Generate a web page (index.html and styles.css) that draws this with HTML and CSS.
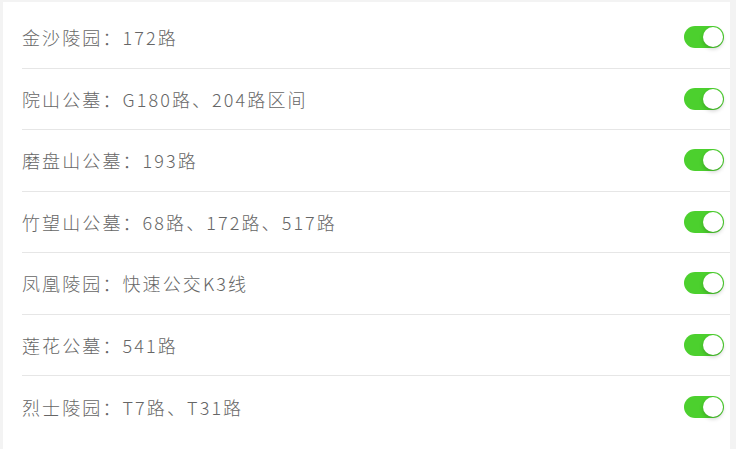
FILE: index.html
```html
<!DOCTYPE html>
<html lang="zh">
<head>
<meta charset="utf-8">
<link rel="stylesheet" href="styles.css">
</head>
<body>
<div class="card">
  <div class="row"><span class="label">金沙陵园：172路</span><span class="switch"><span class="knob"></span></span></div>
  <div class="row"><span class="label">院山公墓：G180路、204路区间</span><span class="switch"><span class="knob"></span></span></div>
  <div class="row"><span class="label">磨盘山公墓：193路</span><span class="switch"><span class="knob"></span></span></div>
  <div class="row"><span class="label">竹望山公墓：68路、172路、517路</span><span class="switch"><span class="knob"></span></span></div>
  <div class="row"><span class="label">凤凰陵园：快速公交K3线</span><span class="switch"><span class="knob"></span></span></div>
  <div class="row"><span class="label">莲花公墓：541路</span><span class="switch"><span class="knob"></span></span></div>
  <div class="row"><span class="label">烈士陵园：T7路、T31路</span><span class="switch"><span class="knob"></span></span></div>
</div>
</body>
</html>
```
FILE: styles.css
```css
html, body {
  margin: 0;
  padding: 0;
  background: #f3f3f3;
  height: 100%;
  overflow: hidden;
}
body {
  padding-top: 2px;
  box-sizing: border-box;
}
.card {
  margin: 0 6px 0 3px;
  background: #ffffff;
  padding-top: 5px;
  height: 100%;
  box-sizing: border-box;
}
.row {
  margin-left: 19px;
  height: 61.5px;
  box-sizing: border-box;
  border-bottom: 1px solid #e6e6e6;
  display: flex;
  align-items: center;
  justify-content: space-between;
  padding-right: 6px;
}
.row:last-child {
  border-bottom: none;
}
.label {
  font-family: "Noto Sans CJK SC", "Noto Sans", sans-serif;
  font-size: 18px;
  font-weight: 300;
  color: #666666;
  letter-spacing: 2.1px;
}
.switch {
  width: 40px;
  height: 22px;
  border-radius: 11px;
  background: #4cd02e;
  display: flex;
  align-items: center;
  justify-content: flex-end;
  padding: 0 1px;
  box-sizing: border-box;
}
.knob {
  width: 20px;
  height: 20px;
  border-radius: 50%;
  background: #ffffff;
  box-shadow: 0 2px 4px rgba(0,0,0,0.2);
}
```
